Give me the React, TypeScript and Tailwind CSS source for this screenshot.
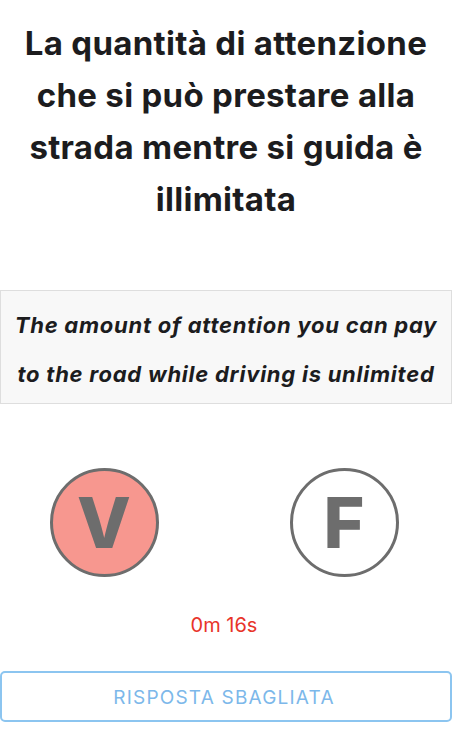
import React from "react";

export default function App() {
  return (
    <div className="w-[452px] bg-white min-h-[756px]" style={{ fontFamily: "Inter, 'Noto Sans', sans-serif" }}>
      <div className="pt-[17px] px-[6px] text-center text-[33px] tracking-[0.3px] leading-[52px] font-bold text-[#1c1c1e]">
        La quantità di attenzione che si può prestare alla strada mentre si guida è illimitata
      </div>
      <div className="mt-[65px] h-[114px] pt-[6px] bg-[#f8f8f8] border border-[#dedede] flex items-center justify-center">
        <p className="text-center italic font-bold text-[22px] tracking-[0.75px] leading-[49px] text-[#1c1c1e]">
          The amount of attention you can pay<br />to the road while driving is unlimited
        </p>
      </div>
      <div className="mt-[64px] flex justify-center gap-[131px] pr-[4px]">
        <div className="w-[109px] h-[109px] rounded-full border-[3px] border-[#6d6d6d] bg-[#f7978f] flex items-center justify-center">
          <span className="text-[70px] font-extrabold text-[#6d6d6d] leading-none">V</span>
        </div>
        <div className="w-[109px] h-[109px] rounded-full border-[3px] border-[#6d6d6d] bg-white flex items-center justify-center">
          <span className="text-[70px] font-extrabold text-[#6d6d6d] leading-none">F</span>
        </div>
      </div>
      <div className="mt-[33px] text-center text-[20px] text-[#e8342a] pr-[4px]">0m 16s</div>
      <div className="mt-[31px] h-[51px] pt-[4px] border-2 border-[#8cc5f0] rounded-[5px] flex items-center justify-center">
        <span className="text-[19px] tracking-[1.2px] text-[#7cb8ea] pr-[4px]">RISPOSTA SBAGLIATA</span>
      </div>
    </div>
  );
}
